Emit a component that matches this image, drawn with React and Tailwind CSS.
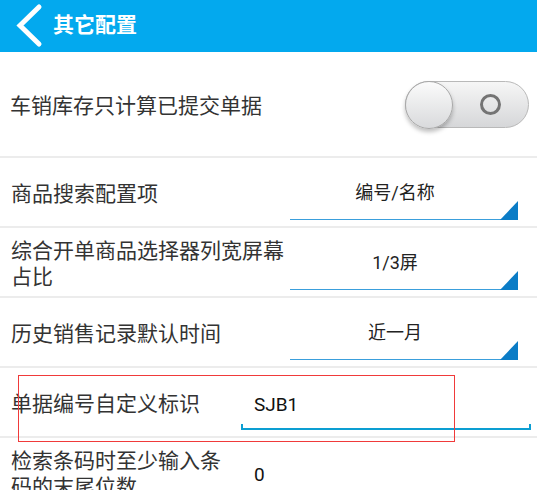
import React from "react";

const SPINNERS = [
	{ label: "商品搜索配置项", value: "编号/名称" },
	{ label: "综合开单商品选择器列宽屏幕占比", value: "1/3屏" },
	{ label: "历史销售记录默认时间", value: "近一月" },
];

const INPUTS = [
	{ label: "单据编号自定义标识", value: "SJB1" },
	{ label: "检索条码时至少输入条码的末尾位数", value: "0" },
];

function Toggle() {
	return (
		<div className="relative mt-[1px] h-[47px] w-[124px] rounded-full border border-[#b9b9b9] bg-gradient-to-b from-[#f6f6f6] to-[#d6d7d9]">
			<div className="absolute left-[-1px] top-[-1px] h-[48px] w-[48px] rounded-full border border-[#a9a9a9] bg-gradient-to-b from-[#fbfbfb] to-[#d9dadc] shadow-[0_3px_4px_rgba(0,0,0,0.25)]" />
			<div className="absolute left-[74px] top-[12px] h-[21px] w-[21px] rounded-full border-[3px] border-[#747474]" />
		</div>
	);
}

function SpinnerRow({ label, value }) {
	return (
		<div className="flex h-[70px] border-b-2 border-[#ececec]">
			<div className="flex w-[290px] items-center pl-[11px] pr-[4px] pt-[4px] text-[21px] leading-[26px] text-[#333]">
				{label}
			</div>
			<div className="relative flex h-[62px] w-[228px] items-center justify-center border-b border-[#3a9fdc] pr-[18px] pt-[8px] text-[18px] text-[#222]">
				{value}
				<svg className="absolute bottom-[-1px] right-0 h-[19px] w-[18px]" viewBox="0 0 18 19">
					<polygon points="18,0 18,19 0,19" fill="#0b7cc6" />
				</svg>
			</div>
		</div>
	);
}

function InputRow({ label, value }) {
	return (
		<div className="flex h-[70px] border-b-2 border-[#ececec]">
			<div className="flex w-[241px] items-center pl-[11px] pr-[10px] pt-[4px] text-[21px] leading-[26px] text-[#333]">
				{label}
			</div>
			<div className="flex w-[290px] flex-col">
				<div className="flex h-[56px] items-center pl-[13px] pt-[18px] text-[19px] text-[#111]">{value}</div>
				<div className="h-[6px] border-x-2 border-b-2 border-[#0c9ed2]" />
			</div>
		</div>
	);
}

export default function App() {
	return (
		<div className="relative h-[490px] w-[537px] overflow-hidden bg-white font-['Roboto','Noto_Sans_CJK_SC',sans-serif]">
			<header className="flex h-[52px] items-center bg-[#03a9ee]">
				<svg className="h-[52px] w-[50px] shrink-0" viewBox="0 0 50 52">
					<polyline points="39,7 20,25.5 39,44" fill="none" stroke="#fff" strokeWidth="5" strokeLinecap="round" strokeLinejoin="miter" />
				</svg>
				<span className="ml-[3px] text-[21px] font-bold text-white">其它配置</span>
			</header>

			<div className="flex h-[106px] items-center justify-between border-b-2 border-[#ececec] pl-[10px] pr-[8px]">
				<span className="pt-[5px] text-[21px] text-[#333]">车销库存只计算已提交单据</span>
				<Toggle />
			</div>

			{SPINNERS.map((item) => (
				<SpinnerRow key={item.label} {...item} />
			))}

			{INPUTS.map((item) => (
				<InputRow key={item.label} {...item} />
			))}

			<div className="absolute left-[18px] top-[375px] h-[67px] w-[437px] border border-[#f03a3a]" />
		</div>
	);
}
